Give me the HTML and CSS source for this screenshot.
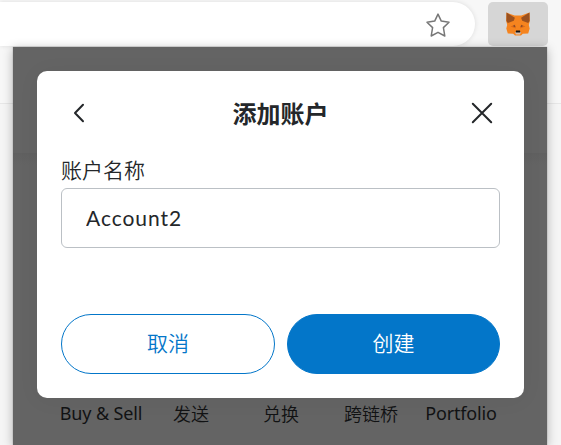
FILE: index.html
```html
<!DOCTYPE html>
<html lang="zh-CN">
<head>
<meta charset="utf-8">
<title>添加账户</title>
<link rel="stylesheet" href="styles.css">
</head>
<body>
<header class="toolbar">
  <div class="address">
    <svg width="26" height="26" viewBox="0 0 26 26" fill="none" stroke="#777" stroke-width="1.5" stroke-linejoin="round"><path d="M13 2.1 16.3 9.1 24 10.2 18.4 15.6 19.8 24 13 20.3 6.2 24 7.6 15.6 2 10.2 9.7 9.1Z"/></svg>
  </div>
  <div class="extension">
    <svg width="24" height="24" viewBox="0 0 24 24">
      <path fill="#f5841f" d="M.5.6 8.6 3.6h6.8L23.5.6l.3 8.4-1 4 .9 3.5-1.5 5-5.4.3-1.8 1.6H9l-1.8-1.6-5.4-.3-1.5-5 .9-3.5-1-4Z"/>
      <path fill="#9b511f" d="M.5.6 8.9 5.8 7.8 8.8 1.8 11 .4 9ZM23.5.6 15.1 5.8l1.1 3 6 2.2L23.6 9Z"/>
      <path fill="#de6c18" d="M4.5 14.5 9 12.5l1 4ZM19.5 14.5 15 12.5l-1 4Z"/>
      <path fill="#613d32" d="m6.8 14 2-.8.6 1.7ZM17.2 14l-2-.8-.6 1.7Z"/>
      <path fill="#d4bfb2" d="M8.8 20h6.4L14 22.6h-4Z"/>
      <path fill="#161616" d="M10 18.4h4l.3 2.2H9.7Z"/>
    </svg>
  </div>
</header>
<main class="popup">
  <section class="dialog">
    <div class="dialog-header">
      <svg width="36" height="24" viewBox="0 0 36 24" fill="none" stroke="#24272a" stroke-width="2" stroke-linecap="round" stroke-linejoin="round"><path d="M22 3.8 14 12l8 8.2"/></svg>
      <h1>添加账户</h1>
      <svg width="36" height="24" viewBox="0 0 36 24" fill="none" stroke="#24272a" stroke-width="2" stroke-linecap="round"><path d="M8.8 2.8 27.2 21.2M27.2 2.8 8.8 21.2"/></svg>
    </div>
    <label for="account">账户名称</label>
    <input id="account" type="text" value="Account2">
    <div class="actions">
      <button class="cancel">取消</button>
      <button class="create">创建</button>
    </div>
  </section>
  <nav class="shortcuts">
    <span class="latin">Buy &amp; Sell</span><span>发送</span><span>兑换</span><span>跨链桥</span><span class="latin">Portfolio</span>
  </nav>
</main>
</body>
</html>
```
FILE: styles.css
```css
* { box-sizing: border-box; }
body {
  margin: 0;
  height: 445px;
  overflow: hidden;
  display: flex;
  flex-direction: column;
  background: linear-gradient(#f7f7f7 103px, #e7e7e7 103px, #e7e7e7 104px, #f5f5f5 104px);
  color: #24272a;
  font-family: "Noto Sans CJK SC", sans-serif;
}
svg { display: block; }
.toolbar {
  height: 47px;
  display: flex;
  align-items: flex-start;
  padding-top: 2px;
  gap: 13px;
}
.address {
  width: 475px;
  height: 44px;
  display: flex;
  align-items: center;
  justify-content: flex-end;
  padding: 1px 24px 0 0;
  background: #fff;
  border-radius: 0 22px 22px 0;
  box-shadow: 0 0 5px #0000001c;
}
.extension {
  width: 60px;
  height: 44px;
  display: flex;
  align-items: center;
  justify-content: center;
  background: #d6d6d6;
  border-radius: 5px;
}
.popup {
  width: 534px;
  height: 398px;
  margin-left: 13px;
  padding: 24px 23px 0 24px;
  background: linear-gradient(#646464 106px, #606060 106px, #646464 118px);
  box-shadow: 0 2px 10px #00000048, 0 0 1px #00000060;
}
.dialog {
  height: 327px;
  padding: 24px;
  background: #fff;
  border-radius: 10px;
  box-shadow: 0 2px 22px #0000000c;
}
.dialog-header {
  height: 36px;
  display: flex;
  align-items: center;
  justify-content: space-between;
}
h1 {
  margin: 0;
  font: 700 24px/36px "Noto Sans CJK SC", sans-serif;
}
label {
  display: block;
  height: 34px;
  margin-top: 23px;
  font: 350 21px/30px "Noto Sans CJK SC", sans-serif;
}
input {
  display: block;
  width: 100%;
  height: 60px;
  padding: 0 24px 2px;
  border: 1px solid #bbc0c5;
  border-radius: 6px;
  background: #fff;
  color: #24272a;
  font: 21px Lato, sans-serif;
  letter-spacing: .95px;
}
.actions {
  display: grid;
  grid-template-columns: 214px 213px;
  gap: 12px;
  margin-top: 66px;
}
button {
  height: 60px;
  padding: 0 0 4px;
  border: 1px solid #0376c9;
  border-radius: 30px;
  font: 350 21px "Noto Sans CJK SC", sans-serif;
}
.cancel { background: #fff; color: #0376c9; }
.create { background: #0376c9; color: #fff; }
.shortcuts {
  display: grid;
  grid-template-columns: 82px 98px 82px 98px 82px;
  margin: 2px 0 0 23px;
  color: #111213;
  font-size: 18px;
  font-weight: 350;
  line-height: 26px;
  text-align: center;
  white-space: nowrap;
}
.shortcuts span { justify-self: center; }
.shortcuts .latin {
  font-family: "Noto Sans", sans-serif;
  font-weight: 400;
  letter-spacing: -.15px;
}
```
